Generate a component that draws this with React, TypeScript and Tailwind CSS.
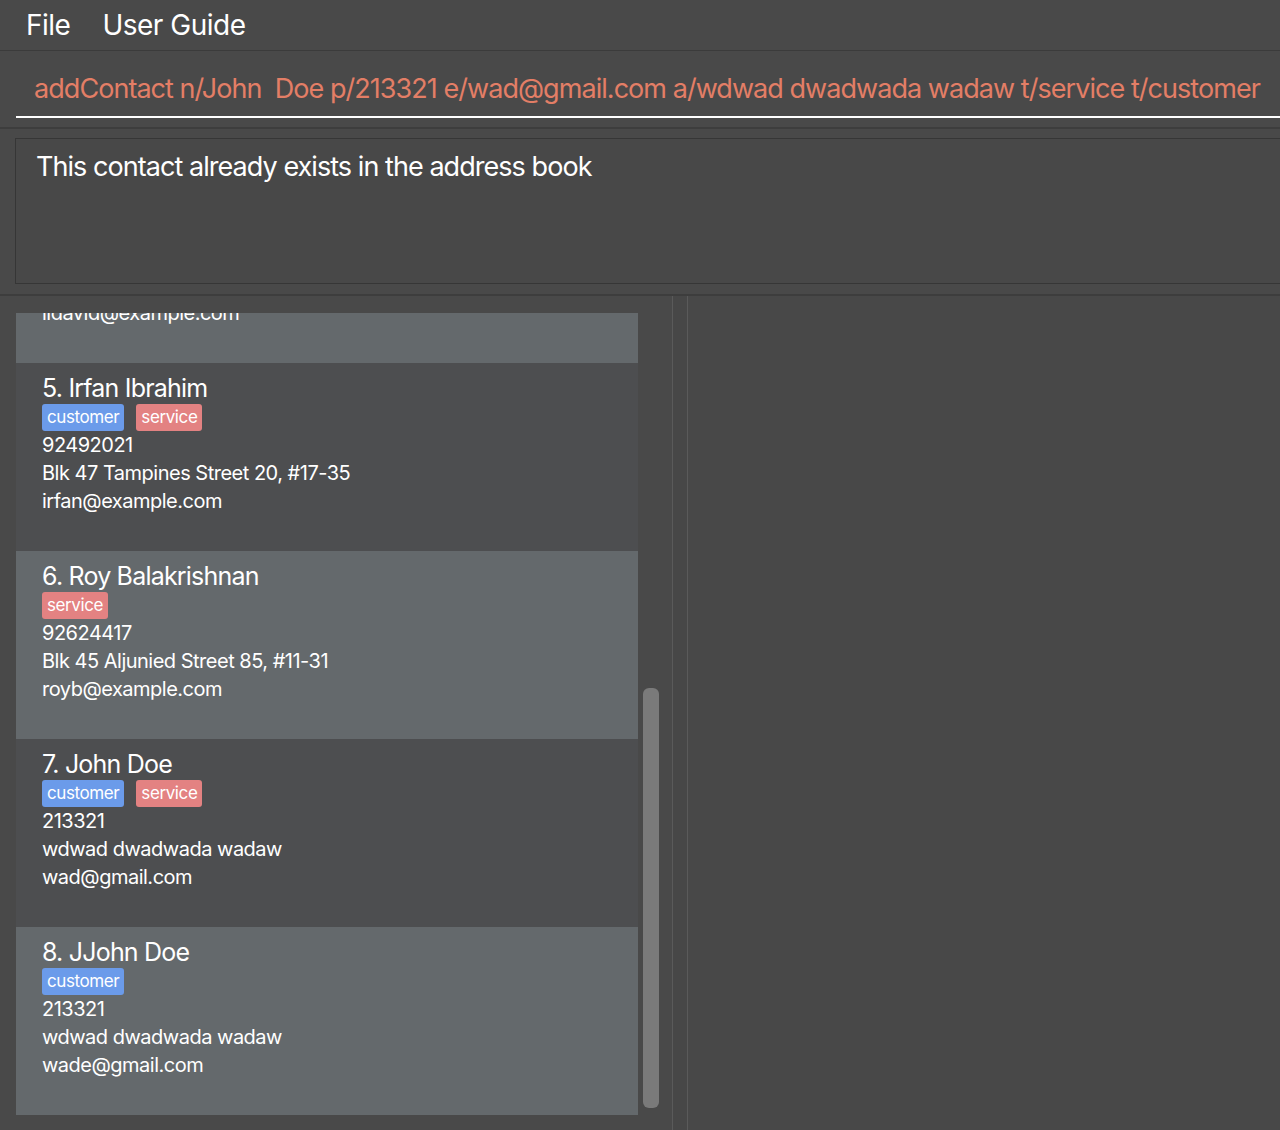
import React from 'react';

interface Contact {
  index: number;
  name: string;
  tags: string[];
  phone: string;
  address: string;
  email: string;
}

const contacts: Contact[] = [
  { index: 4, name: 'David Li', tags: ['customer'], phone: '91031282', address: 'Blk 436 Serangoon Gardens Street 26, #16-43', email: 'lidavid@example.com' },
  { index: 5, name: 'Irfan Ibrahim', tags: ['customer', 'service'], phone: '92492021', address: 'Blk 47 Tampines Street 20, #17-35', email: 'irfan@example.com' },
  { index: 6, name: 'Roy Balakrishnan', tags: ['service'], phone: '92624417', address: 'Blk 45 Aljunied Street 85, #11-31', email: 'royb@example.com' },
  { index: 7, name: 'John Doe', tags: ['customer', 'service'], phone: '213321', address: 'wdwad dwadwada wadaw', email: 'wad@gmail.com' },
  { index: 8, name: 'JJohn Doe', tags: ['customer'], phone: '213321', address: 'wdwad dwadwada wadaw', email: 'wade@gmail.com' },
];

const font = { fontFamily: 'Inter, "Liberation Sans", sans-serif' };

function ContactCard({ c }: { c: Contact }) {
  // even rows are the lighter grey
  const light = c.index % 2 === 0;
  return (
    <div
      className={`h-[188px] shrink-0 pl-[26px] pt-[10px] ${light ? 'bg-[#64696c]' : 'bg-[#4d4e50]'}`}
    >
      <div className="text-[25px] leading-[30px] text-white tracking-[-0.8px]">
        {c.index}. {c.name}
      </div>
      <div className="flex gap-[12px] mt-[1px] h-[27px]">
        {c.tags.map((t) => (
          <span
            key={t}
            className={`px-[5px] rounded-[3px] text-[17px] leading-[27px] text-white tracking-[-0.4px] ${
              t === 'customer' ? 'bg-[#6b9bea]' : 'bg-[#e38282]'
            }`}
          >
            {t}
          </span>
        ))}
      </div>
      <div className="text-[20px] leading-[28px] text-white tracking-[-0.5px]">
        <div>{c.phone}</div>
        <div>{c.address}</div>
        <div>{c.email}</div>
      </div>
    </div>
  );
}

export default function App() {
  return (
    <div className="w-[1280px] h-[1130px] bg-[#494949] flex flex-col overflow-hidden" style={font}>
      {/* Menu bar */}
      <div className="h-[51px] shrink-0 flex items-center gap-[32px] pl-[26px] text-[28px] text-white tracking-[-0.5px] border-b border-[#3b3b3b]">
        <span>File</span>
        <span>User Guide</span>
      </div>

      {/* Command box */}
      <div className="h-[78px] shrink-0 pl-[16px] pt-[20px] border-b-[2px] border-[#3d3d3d]">
        <div className="h-[47px] border-b-[2px] border-white pl-[18px] text-[27px] leading-[36px] text-[#e37e66] tracking-[-0.95px] whitespace-nowrap overflow-hidden">
          addContact n/John&nbsp; Doe p/213321 e/wad@gmail.com a/wdwad dwadwada wadaw t/service t/customer
        </div>
      </div>

      {/* Result display */}
      <div className="shrink-0 pt-[9px] pl-[15px] pb-[10px] border-b-[2px] border-[#3d3d3d]">
        <div className="h-[146px] border border-r-0 border-[#363636] bg-[#484848] pl-[20px] pt-[10px] text-[27px] leading-[36px] text-white tracking-[-0.95px]">
          This contact already exists in the address book
        </div>
      </div>

      {/* Main area */}
      <div className="flex-1 flex min-h-0">
        <div className="w-[673px] shrink-0 border-r border-[#5a5a5a] pt-[17px] pl-[16px] flex gap-[5px]">
          <div className="w-[622px] h-[802px] overflow-hidden flex flex-col">
            <div className="flex flex-col -mt-[138px]">
              {contacts.map((c) => (
                <ContactCard key={c.index} c={c} />
              ))}
            </div>
          </div>
          <div className="w-[16px] h-[812px] flex flex-col">
            <div className="mt-[375px] h-[420px] rounded-[6px] bg-[#7a7a7a]" />
          </div>
        </div>
        <div className="w-[15px] shrink-0 bg-[#474747] border-r border-[#5a5a5a]" />
        <div className="flex-1 bg-[#484848]" />
      </div>
    </div>
  );
}
